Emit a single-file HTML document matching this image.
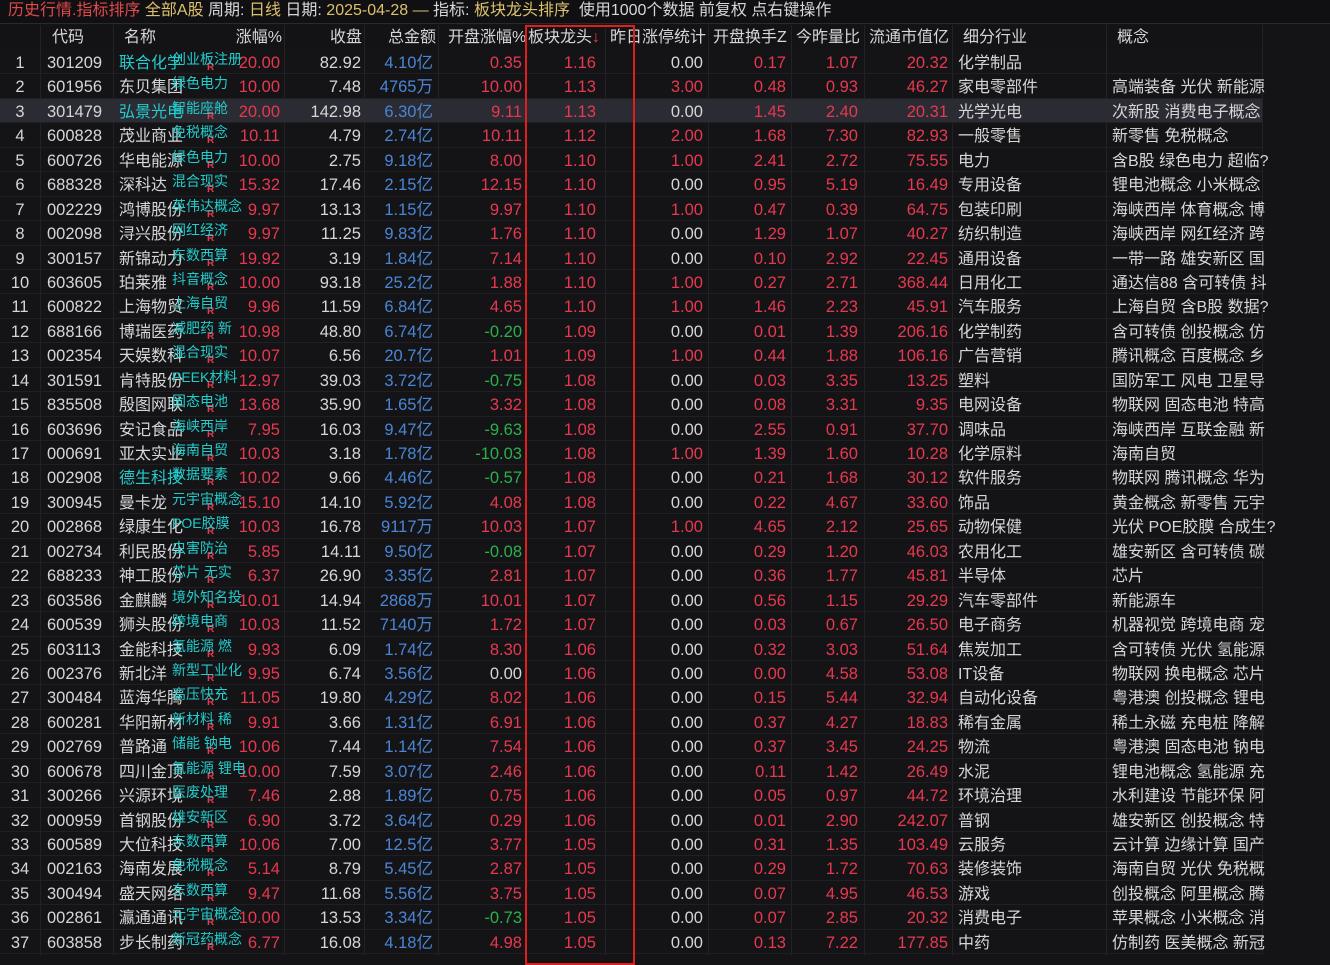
<!DOCTYPE html><html><head><meta charset="utf-8"><style>
*{margin:0;padding:0;box-sizing:border-box}
body{width:1330px;height:955px;overflow:hidden;background:#141417;font-family:"Liberation Sans","Noto Sans CJK SC",sans-serif;font-size:16.5px;color:#d6d6d6;position:relative}
.top{position:absolute;left:0;top:0;width:1330px;height:24px;background:#101013;border-bottom:1px solid #2a2a2e;padding-left:8px;line-height:21px;font-size:16px;white-space:nowrap}
.rd{color:#e04a4a}.yl{color:#dcc06a}
.hd{position:absolute;left:0;top:25px;width:1262px;height:25px;line-height:25px;background:#131316;font-size:16px}
.body{position:absolute;left:0;top:50px;width:1262px}
.r{position:relative;height:24.45px;line-height:27px;border-bottom:1px solid #202024;white-space:nowrap}
.r.sel{background:#2b2b33}
i{font-style:normal;position:absolute;top:0}
.a{left:0;width:40px;text-align:center}
.b{left:47px}
.n{left:119px;font-size:16px}
.t{left:172px;top:1px;font-size:14px;line-height:16px;color:#22cccc;z-index:2}
.k{left:207px;top:12px;font-size:10px;line-height:12px;color:#e8384f;font-weight:bold}
.z{right:982px}.s{right:901px}.m{right:829px;color:#4a86d6}.o{right:740px}.l{right:666px;color:#e8384f}.y{right:559px}.h{right:476px;color:#e8384f}.q{right:404px;color:#e8384f}.v{right:314px;color:#e8384f}
.g{left:958px;font-size:16px}.c{left:1112px;font-size:16px}
.R{color:#e8384f}.G{color:#2bb04c}.cy{color:#22cccc}
.hd i{color:#d6d6d6}
.ln{position:absolute;top:25px;bottom:0;width:1px;background:#222227}
.box{position:absolute;left:525px;top:25px;width:110px;height:940px;border:2px solid #e01e1e}
</style></head><body>
<div class="top"><span class="rd">历史行情.指标排序</span> <span class="yl">全部A股</span> 周期: <span class="yl">日线</span> 日期: <span class="yl">2025-04-28 —</span> 指标: <span class="yl">板块龙头排序</span>&nbsp; 使用1000个数据 前复权 点右键操作</div>
<div class="hd"><i style="left:52px">代码</i><i style="left:124px">名称</i><i style="right:980px">涨幅%</i><i style="right:900px">收盘</i><i style="right:826px">总金额</i><i style="left:448px">开盘涨幅%</i><i style="left:528px">板块龙头<span style="color:#e8384f">↓</span></i><i style="left:610px">昨日涨停统计</i><i style="left:713px">开盘换手Z</i><i style="left:796px">今昨量比</i><i style="left:869px">流通市值亿</i><i style="left:963px">细分行业</i><i style="left:1117px">概念</i></div>
<div class="ln" style="left:40px"></div><div class="ln" style="left:113px"></div><div class="ln" style="left:284px"></div><div class="ln" style="left:364px"></div><div class="ln" style="left:438px"></div><div class="ln" style="left:605px"></div><div class="ln" style="left:708px"></div><div class="ln" style="left:791px"></div><div class="ln" style="left:864px"></div><div class="ln" style="left:952px"></div><div class="ln" style="left:1106px"></div><div class="ln" style="left:1262px"></div>
<div class="body">
<div class="r"><i class=a>1</i><i class=b>301209</i><i class="n cy">联合化学</i><i class=t>创业板注册</i><i class=k>R</i><i class="z R">20.00</i><i class=s>82.92</i><i class=m>4.10亿</i><i class="o R">0.35</i><i class=l>1.16</i><i class=y>0.00</i><i class=h>0.17</i><i class=q>1.07</i><i class=v>20.32</i><i class=g>化学制品</i><i class=c></i></div>
<div class="r"><i class=a>2</i><i class=b>601956</i><i class=n>东贝集团</i><i class=t>绿色电力</i><i class="z R">10.00</i><i class=s>7.48</i><i class=m>4765万</i><i class="o R">10.00</i><i class=l>1.13</i><i class="y R">3.00</i><i class=h>0.48</i><i class=q>0.93</i><i class=v>46.27</i><i class=g>家电零部件</i><i class=c>高端装备 光伏 新能源</i></div>
<div class="r sel"><i class=a>3</i><i class=b>301479</i><i class="n cy">弘景光电</i><i class=t>智能座舱</i><i class=k>R</i><i class="z R">20.00</i><i class=s>142.98</i><i class=m>6.30亿</i><i class="o R">9.11</i><i class=l>1.13</i><i class=y>0.00</i><i class=h>1.45</i><i class=q>2.40</i><i class=v>20.31</i><i class=g>光学光电</i><i class=c>次新股 消费电子概念</i></div>
<div class="r"><i class=a>4</i><i class=b>600828</i><i class=n>茂业商业</i><i class=t>免税概念</i><i class=k>R</i><i class="z R">10.11</i><i class=s>4.79</i><i class=m>2.74亿</i><i class="o R">10.11</i><i class=l>1.12</i><i class="y R">2.00</i><i class=h>1.68</i><i class=q>7.30</i><i class=v>82.93</i><i class=g>一般零售</i><i class=c>新零售 免税概念</i></div>
<div class="r"><i class=a>5</i><i class=b>600726</i><i class=n>华电能源</i><i class=t>绿色电力</i><i class=k>R</i><i class="z R">10.00</i><i class=s>2.75</i><i class=m>9.18亿</i><i class="o R">8.00</i><i class=l>1.10</i><i class="y R">1.00</i><i class=h>2.41</i><i class=q>2.72</i><i class=v>75.55</i><i class=g>电力</i><i class=c>含B股 绿色电力 超临?</i></div>
<div class="r"><i class=a>6</i><i class=b>688328</i><i class=n>深科达</i><i class=t>混合现实</i><i class=k>R</i><i class="z R">15.32</i><i class=s>17.46</i><i class=m>2.15亿</i><i class="o R">12.15</i><i class=l>1.10</i><i class=y>0.00</i><i class=h>0.95</i><i class=q>5.19</i><i class=v>16.49</i><i class=g>专用设备</i><i class=c>锂电池概念 小米概念</i></div>
<div class="r"><i class=a>7</i><i class=b>002229</i><i class=n>鸿博股份</i><i class=t>英伟达概念</i><i class=k>R</i><i class="z R">9.97</i><i class=s>13.13</i><i class=m>1.15亿</i><i class="o R">9.97</i><i class=l>1.10</i><i class="y R">1.00</i><i class=h>0.47</i><i class=q>0.39</i><i class=v>64.75</i><i class=g>包装印刷</i><i class=c>海峡西岸 体育概念 博</i></div>
<div class="r"><i class=a>8</i><i class=b>002098</i><i class=n>浔兴股份</i><i class=t>网红经济</i><i class=k>R</i><i class="z R">9.97</i><i class=s>11.25</i><i class=m>9.83亿</i><i class="o R">1.76</i><i class=l>1.10</i><i class=y>0.00</i><i class=h>1.29</i><i class=q>1.07</i><i class=v>40.27</i><i class=g>纺织制造</i><i class=c>海峡西岸 网红经济 跨</i></div>
<div class="r"><i class=a>9</i><i class=b>300157</i><i class=n>新锦动力</i><i class=t>东数西算</i><i class=k>R</i><i class="z R">19.92</i><i class=s>3.19</i><i class=m>1.84亿</i><i class="o R">7.14</i><i class=l>1.10</i><i class=y>0.00</i><i class=h>0.10</i><i class=q>2.92</i><i class=v>22.45</i><i class=g>通用设备</i><i class=c>一带一路 雄安新区 国</i></div>
<div class="r"><i class=a>10</i><i class=b>603605</i><i class=n>珀莱雅</i><i class=t>抖音概念</i><i class=k>R</i><i class="z R">10.00</i><i class=s>93.18</i><i class=m>25.2亿</i><i class="o R">1.88</i><i class=l>1.10</i><i class="y R">1.00</i><i class=h>0.27</i><i class=q>2.71</i><i class=v>368.44</i><i class=g>日用化工</i><i class=c>通达信88 含可转债 抖</i></div>
<div class="r"><i class=a>11</i><i class=b>600822</i><i class=n>上海物贸</i><i class=t>上海自贸</i><i class=k>R</i><i class="z R">9.96</i><i class=s>11.59</i><i class=m>6.84亿</i><i class="o R">4.65</i><i class=l>1.10</i><i class="y R">1.00</i><i class=h>1.46</i><i class=q>2.23</i><i class=v>45.91</i><i class=g>汽车服务</i><i class=c>上海自贸 含B股 数据?</i></div>
<div class="r"><i class=a>12</i><i class=b>688166</i><i class=n>博瑞医药</i><i class=t>减肥药 新</i><i class=k>R</i><i class="z R">10.98</i><i class=s>48.80</i><i class=m>6.74亿</i><i class="o G">-0.20</i><i class=l>1.09</i><i class=y>0.00</i><i class=h>0.01</i><i class=q>1.39</i><i class=v>206.16</i><i class=g>化学制药</i><i class=c>含可转债 创投概念 仿</i></div>
<div class="r"><i class=a>13</i><i class=b>002354</i><i class=n>天娱数科</i><i class=t>混合现实</i><i class=k>R</i><i class="z R">10.07</i><i class=s>6.56</i><i class=m>20.7亿</i><i class="o R">1.01</i><i class=l>1.09</i><i class="y R">1.00</i><i class=h>0.44</i><i class=q>1.88</i><i class=v>106.16</i><i class=g>广告营销</i><i class=c>腾讯概念 百度概念 乡</i></div>
<div class="r"><i class=a>14</i><i class=b>301591</i><i class=n>肯特股份</i><i class=t>PEEK材料</i><i class=k>R</i><i class="z R">12.97</i><i class=s>39.03</i><i class=m>3.72亿</i><i class="o G">-0.75</i><i class=l>1.08</i><i class=y>0.00</i><i class=h>0.03</i><i class=q>3.35</i><i class=v>13.25</i><i class=g>塑料</i><i class=c>国防军工 风电 卫星导</i></div>
<div class="r"><i class=a>15</i><i class=b>835508</i><i class=n>殷图网联</i><i class=t>固态电池</i><i class=k>R</i><i class="z R">13.68</i><i class=s>35.90</i><i class=m>1.65亿</i><i class="o R">3.32</i><i class=l>1.08</i><i class=y>0.00</i><i class=h>0.08</i><i class=q>3.31</i><i class=v>9.35</i><i class=g>电网设备</i><i class=c>物联网 固态电池 特高</i></div>
<div class="r"><i class=a>16</i><i class=b>603696</i><i class=n>安记食品</i><i class=t>海峡西岸</i><i class=k>R</i><i class="z R">7.95</i><i class=s>16.03</i><i class=m>9.47亿</i><i class="o G">-9.63</i><i class=l>1.08</i><i class=y>0.00</i><i class=h>2.55</i><i class=q>0.91</i><i class=v>37.70</i><i class=g>调味品</i><i class=c>海峡西岸 互联金融 新</i></div>
<div class="r"><i class=a>17</i><i class=b>000691</i><i class=n>亚太实业</i><i class=t>海南自贸</i><i class=k>R</i><i class="z R">10.03</i><i class=s>3.18</i><i class=m>1.78亿</i><i class="o G">-10.03</i><i class=l>1.08</i><i class="y R">1.00</i><i class=h>1.39</i><i class=q>1.60</i><i class=v>10.28</i><i class=g>化学原料</i><i class=c>海南自贸</i></div>
<div class="r"><i class=a>18</i><i class=b>002908</i><i class="n cy">德生科技</i><i class=t>数据要素</i><i class=k>R</i><i class="z R">10.02</i><i class=s>9.66</i><i class=m>4.46亿</i><i class="o G">-0.57</i><i class=l>1.08</i><i class=y>0.00</i><i class=h>0.21</i><i class=q>1.68</i><i class=v>30.12</i><i class=g>软件服务</i><i class=c>物联网 腾讯概念 华为</i></div>
<div class="r"><i class=a>19</i><i class=b>300945</i><i class=n>曼卡龙</i><i class=t>元宇宙概念</i><i class=k>R</i><i class="z R">15.10</i><i class=s>14.10</i><i class=m>5.92亿</i><i class="o R">4.08</i><i class=l>1.08</i><i class=y>0.00</i><i class=h>0.22</i><i class=q>4.67</i><i class=v>33.60</i><i class=g>饰品</i><i class=c>黄金概念 新零售 元宇</i></div>
<div class="r"><i class=a>20</i><i class=b>002868</i><i class=n>绿康生化</i><i class=t>POE胶膜</i><i class=k>R</i><i class="z R">10.03</i><i class=s>16.78</i><i class=m>9117万</i><i class="o R">10.03</i><i class=l>1.07</i><i class="y R">1.00</i><i class=h>4.65</i><i class=q>2.12</i><i class=v>25.65</i><i class=g>动物保健</i><i class=c>光伏 POE胶膜 合成生?</i></div>
<div class="r"><i class=a>21</i><i class=b>002734</i><i class=n>利民股份</i><i class=t>虫害防治</i><i class=k>R</i><i class="z R">5.85</i><i class=s>14.11</i><i class=m>9.50亿</i><i class="o G">-0.08</i><i class=l>1.07</i><i class=y>0.00</i><i class=h>0.29</i><i class=q>1.20</i><i class=v>46.03</i><i class=g>农用化工</i><i class=c>雄安新区 含可转债 碳</i></div>
<div class="r"><i class=a>22</i><i class=b>688233</i><i class=n>神工股份</i><i class=t>芯片 无实</i><i class=k>R</i><i class="z R">6.37</i><i class=s>26.90</i><i class=m>3.35亿</i><i class="o R">2.81</i><i class=l>1.07</i><i class=y>0.00</i><i class=h>0.36</i><i class=q>1.77</i><i class=v>45.81</i><i class=g>半导体</i><i class=c>芯片</i></div>
<div class="r"><i class=a>23</i><i class=b>603586</i><i class=n>金麒麟</i><i class=t>境外知名投</i><i class=k>R</i><i class="z R">10.01</i><i class=s>14.94</i><i class=m>2868万</i><i class="o R">10.01</i><i class=l>1.07</i><i class=y>0.00</i><i class=h>0.56</i><i class=q>1.15</i><i class=v>29.29</i><i class=g>汽车零部件</i><i class=c>新能源车</i></div>
<div class="r"><i class=a>24</i><i class=b>600539</i><i class=n>狮头股份</i><i class=t>跨境电商</i><i class=k>R</i><i class="z R">10.03</i><i class=s>11.52</i><i class=m>7140万</i><i class="o R">1.72</i><i class=l>1.07</i><i class=y>0.00</i><i class=h>0.03</i><i class=q>0.67</i><i class=v>26.50</i><i class=g>电子商务</i><i class=c>机器视觉 跨境电商 宠</i></div>
<div class="r"><i class=a>25</i><i class=b>603113</i><i class=n>金能科技</i><i class=t>氢能源 燃</i><i class=k>R</i><i class="z R">9.93</i><i class=s>6.09</i><i class=m>1.74亿</i><i class="o R">8.30</i><i class=l>1.06</i><i class=y>0.00</i><i class=h>0.32</i><i class=q>3.03</i><i class=v>51.64</i><i class=g>焦炭加工</i><i class=c>含可转债 光伏 氢能源</i></div>
<div class="r"><i class=a>26</i><i class=b>002376</i><i class=n>新北洋</i><i class=t>新型工业化</i><i class=k>R</i><i class="z R">9.95</i><i class=s>6.74</i><i class=m>3.56亿</i><i class=o>0.00</i><i class=l>1.06</i><i class=y>0.00</i><i class=h>0.00</i><i class=q>4.58</i><i class=v>53.08</i><i class=g>IT设备</i><i class=c>物联网 换电概念 芯片</i></div>
<div class="r"><i class=a>27</i><i class=b>300484</i><i class=n>蓝海华腾</i><i class=t>高压快充</i><i class=k>R</i><i class="z R">11.05</i><i class=s>19.80</i><i class=m>4.29亿</i><i class="o R">8.02</i><i class=l>1.06</i><i class=y>0.00</i><i class=h>0.15</i><i class=q>5.44</i><i class=v>32.94</i><i class=g>自动化设备</i><i class=c>粤港澳 创投概念 锂电</i></div>
<div class="r"><i class=a>28</i><i class=b>600281</i><i class=n>华阳新材</i><i class=t>新材料 稀</i><i class=k>R</i><i class="z R">9.91</i><i class=s>3.66</i><i class=m>1.31亿</i><i class="o R">6.91</i><i class=l>1.06</i><i class=y>0.00</i><i class=h>0.37</i><i class=q>4.27</i><i class=v>18.83</i><i class=g>稀有金属</i><i class=c>稀土永磁 充电桩 降解</i></div>
<div class="r"><i class=a>29</i><i class=b>002769</i><i class=n>普路通</i><i class=t>储能 钠电</i><i class=k>R</i><i class="z R">10.06</i><i class=s>7.44</i><i class=m>1.14亿</i><i class="o R">7.54</i><i class=l>1.06</i><i class=y>0.00</i><i class=h>0.37</i><i class=q>3.45</i><i class=v>24.25</i><i class=g>物流</i><i class=c>粤港澳 固态电池 钠电</i></div>
<div class="r"><i class=a>30</i><i class=b>600678</i><i class=n>四川金顶</i><i class=t>氢能源 锂电</i><i class=k>R</i><i class="z R">10.00</i><i class=s>7.59</i><i class=m>3.07亿</i><i class="o R">2.46</i><i class=l>1.06</i><i class=y>0.00</i><i class=h>0.11</i><i class=q>1.42</i><i class=v>26.49</i><i class=g>水泥</i><i class=c>锂电池概念 氢能源 充</i></div>
<div class="r"><i class=a>31</i><i class=b>300266</i><i class=n>兴源环境</i><i class=t>医废处理</i><i class=k>R</i><i class="z R">7.46</i><i class=s>2.88</i><i class=m>1.89亿</i><i class="o R">0.75</i><i class=l>1.06</i><i class=y>0.00</i><i class=h>0.05</i><i class=q>0.97</i><i class=v>44.72</i><i class=g>环境治理</i><i class=c>水利建设 节能环保 阿</i></div>
<div class="r"><i class=a>32</i><i class=b>000959</i><i class=n>首钢股份</i><i class=t>雄安新区</i><i class=k>R</i><i class="z R">6.90</i><i class=s>3.72</i><i class=m>3.64亿</i><i class="o R">0.29</i><i class=l>1.06</i><i class=y>0.00</i><i class=h>0.01</i><i class=q>2.90</i><i class=v>242.07</i><i class=g>普钢</i><i class=c>雄安新区 创投概念 特</i></div>
<div class="r"><i class=a>33</i><i class=b>600589</i><i class=n>大位科技</i><i class=t>东数西算</i><i class=k>R</i><i class="z R">10.06</i><i class=s>7.00</i><i class=m>12.5亿</i><i class="o R">3.77</i><i class=l>1.05</i><i class=y>0.00</i><i class=h>0.31</i><i class=q>1.35</i><i class=v>103.49</i><i class=g>云服务</i><i class=c>云计算 边缘计算 国产</i></div>
<div class="r"><i class=a>34</i><i class=b>002163</i><i class=n>海南发展</i><i class=t>免税概念</i><i class=k>R</i><i class="z R">5.14</i><i class=s>8.79</i><i class=m>5.45亿</i><i class="o R">2.87</i><i class=l>1.05</i><i class=y>0.00</i><i class=h>0.29</i><i class=q>1.72</i><i class=v>70.63</i><i class=g>装修装饰</i><i class=c>海南自贸 光伏 免税概</i></div>
<div class="r"><i class=a>35</i><i class=b>300494</i><i class=n>盛天网络</i><i class=t>东数西算</i><i class=k>R</i><i class="z R">9.47</i><i class=s>11.68</i><i class=m>5.56亿</i><i class="o R">3.75</i><i class=l>1.05</i><i class=y>0.00</i><i class=h>0.07</i><i class=q>4.95</i><i class=v>46.53</i><i class=g>游戏</i><i class=c>创投概念 阿里概念 腾</i></div>
<div class="r"><i class=a>36</i><i class=b>002861</i><i class=n>瀛通通讯</i><i class=t>元宇宙概念</i><i class=k>R</i><i class="z R">10.00</i><i class=s>13.53</i><i class=m>3.34亿</i><i class="o G">-0.73</i><i class=l>1.05</i><i class=y>0.00</i><i class=h>0.07</i><i class=q>2.85</i><i class=v>20.32</i><i class=g>消费电子</i><i class=c>苹果概念 小米概念 消</i></div>
<div class="r"><i class=a>37</i><i class=b>603858</i><i class=n>步长制药</i><i class=t>新冠药概念</i><i class=k>R</i><i class="z R">6.77</i><i class=s>16.08</i><i class=m>4.18亿</i><i class="o R">4.98</i><i class=l>1.05</i><i class=y>0.00</i><i class=h>0.13</i><i class=q>7.22</i><i class=v>177.85</i><i class=g>中药</i><i class=c>仿制药 医美概念 新冠</i></div>
</div>
<div class="box"></div>
</body></html>
